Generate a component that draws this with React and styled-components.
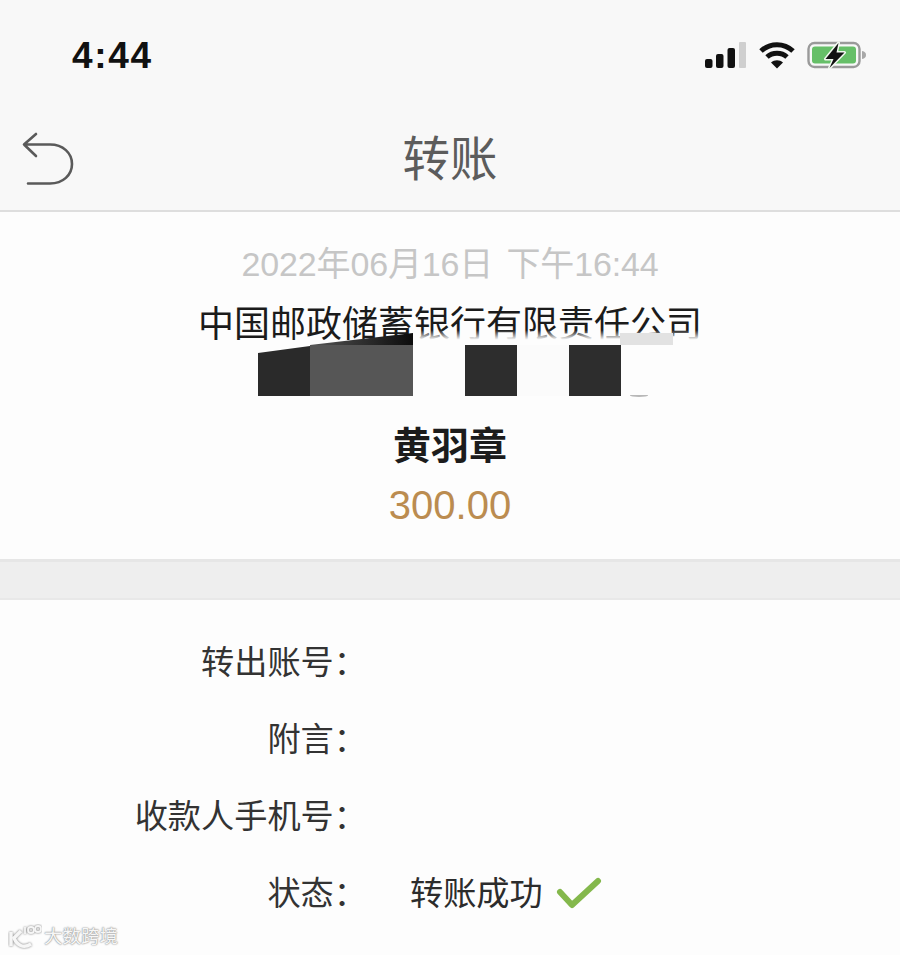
import React from "react";
import styled, { createGlobalStyle } from "styled-components";

const GlobalStyle = createGlobalStyle`
  html, body {
    margin: 0;
    padding: 0;
    background: #fdfdfd;
    font-family: "Liberation Sans", "Noto Sans CJK SC", sans-serif;
  }
`;

const Page = styled.div`
  position: relative;
  width: 900px;
  height: 955px;
  overflow: hidden;
  background: #fdfdfd;
`;

const Header = styled.header`
  height: 210px;
  background: #f8f8f8;
  border-bottom: 2px solid #dedede;
`;

const StatusBar = styled.div`
  height: 110px;
  box-sizing: border-box;
  padding: 36px 33px 0 72px;
  display: flex;
  justify-content: space-between;
  align-items: flex-start;
`;

const Clock = styled.span`
  font-family: "Liberation Sans", sans-serif;
  font-size: 37px;
  line-height: 40px;
  font-weight: 700;
  letter-spacing: 1.7px;
  color: #111;
`;

const StatusIcons = styled.div`
  display: flex;
  align-items: center;
  gap: 12px;
  padding-top: 5px;
`;

const NavBar = styled.nav`
  height: 100px;
  padding-left: 22px;
  display: grid;
  grid-template-columns: 52px 1fr 74px;
  align-items: center;
`;

const NavTitle = styled.h1`
  margin: 0;
  text-align: center;
  font-size: 47.5px;
  line-height: 56px;
  font-weight: 400;
  color: #5c5c5c;
`;

const Summary = styled.section`
  height: 347px;
  box-sizing: border-box;
  padding-top: 32px;
  display: flex;
  flex-direction: column;
  align-items: center;
`;

const DateLine = styled.div`
  font-size: 34px;
  line-height: 40px;
  letter-spacing: -0.15px;
  word-spacing: 4px;
  color: #c6c6c6;
  white-space: pre;
`;

const BankWrap = styled.div`
  position: relative;
  margin-top: 21px;
  width: 520px;
  height: 40px;
  overflow: hidden;
  text-align: center;
`;

const BankName = styled.div`
  font-size: 36px;
  line-height: 40px;
  color: #1b1b1b;
  white-space: nowrap;
`;

const BankFade = styled.div`
  position: absolute;
  left: 224px;
  right: 0;
  bottom: 0;
  height: 15px;
  background: linear-gradient(rgba(253, 253, 253, 0), #fdfdfd 65%);
`;

const AccountMask = styled.div`
  position: relative;
  align-self: flex-start;
  margin-left: 258px;
  display: flex;
  height: 51px;
`;

const MaskBlock = styled.div`
  width: ${(p) => p.$width}px;
  height: 100%;
  background: ${(p) => p.$color};
`;

const MaskEdgeBlock = styled(MaskBlock)`
  clip-path: polygon(0 8px, 100% 1px, 100% 100%, 0 100%);
`;

const MaskSmear = styled.div`
  position: absolute;
  left: 52px;
  top: -12px;
  width: 103px;
  height: 12px;
  background: linear-gradient(90deg, #555, #333 45%, #0c0c0c);
  clip-path: polygon(0 100%, 100% 0, 100% 100%);
`;

const MaskLight = styled.div`
  position: absolute;
  left: 362px;
  top: -12px;
  width: 53px;
  height: 12px;
  background: #e2e2e2;
`;

const MaskTrace = styled.div`
  position: absolute;
  left: ${(p) => p.$left}px;
  bottom: -1px;
  width: ${(p) => p.$width}px;
  height: 3px;
  border-bottom: 2px solid #b8b8b8;
  border-radius: 0 0 50% 50%;
  box-sizing: border-box;
`;

const PayeeName = styled.div`
  margin-top: 28px;
  font-size: 38px;
  line-height: 44px;
  font-weight: 700;
  color: #1c1c1c;
`;

const Amount = styled.div`
  margin-top: 15px;
  font-size: 40px;
  line-height: 44px;
  color: #bb8c50;
`;

const Divider = styled.div`
  height: 41px;
  background: #eeeeee;
  border-top: 3px solid #e6e6e6;
  border-bottom: 2px solid #e8e8e8;
  box-sizing: border-box;
`;

const Details = styled.section`
  padding-top: 43px;
  display: flex;
  flex-direction: column;
  gap: 37px;
`;

const DetailRow = styled.div`
  display: grid;
  grid-template-columns: 367px 1fr;
  height: 40px;
  align-items: center;
`;

const DetailLabel = styled.div`
  text-align: right;
  font-size: 33.2px;
  line-height: 40px;
  color: #333;
  white-space: nowrap;
`;

const DetailValue = styled.div`
  margin-left: 43px;
  display: flex;
  align-items: center;
  gap: 13px;
  font-size: 33.2px;
  line-height: 40px;
  color: #2c2c2c;
`;

const Watermark = styled.div`
  position: absolute;
  left: 8px;
  bottom: 5px;
  display: flex;
  align-items: center;
  gap: 2px;
  font-size: 18.5px;
  line-height: 24px;
  color: #f6f6f6;
  text-shadow: 0 0 2px #8c8c8c, 0 0 1px #8c8c8c;
`;

const Signal = () => (
  <svg width="42" height="26" viewBox="0 0 42 26">
    <rect x="0" y="17" width="7.500" height="9" rx="2" fill="#111" />
    <rect x="11" y="12" width="7.500" height="14" rx="2" fill="#111" />
    <rect x="22.500" y="6" width="7.500" height="20" rx="2" fill="#111" />
    <rect x="34" y="0" width="7" height="26" rx="1" fill="#cfcfcf" />
  </svg>
);

const Wifi = () => (
  <svg width="36" height="28" viewBox="0 0 36 28" fill="none">
    <path d="M2 10C11 1.500 25 1.500 34 10" stroke="#111" strokeWidth="5" />
    <path d="M8 16C13.500 11 22.500 11 28 16" stroke="#111" strokeWidth="5" />
    <path d="M12 21.500 18 27.500 24 21.500C20.500 18.500 15.500 18.500 12 21.500Z" fill="#111" />
  </svg>
);

const Battery = () => (
  <svg width="60" height="28" viewBox="0 0 60 28" fill="none">
    <rect x="1.500" y="2" width="51" height="24" rx="6" stroke="#9a9a9a" strokeWidth="2.400" />
    <rect x="5" y="5.500" width="44" height="17" rx="3" fill="#66bf68" />
    <path d="M55 10c3 .5 4 2 4 4s-1 3.500-4 4z" fill="#a8a8a8" />
    <path
      d="M31.500 2 18.500 18H26.500L22.500 27 37.500 11.500H29.500L31.500 2Z"
      fill="#111"
      stroke="#f2f8f0"
      strokeWidth="3"
      paintOrder="stroke"
      strokeLinejoin="round"
    />
  </svg>
);

const BackIcon = () => (
  <svg width="52" height="56" viewBox="0 0 52 56" fill="none">
    <path
      d="M14 2 2 12.500 14 24M2 12.500H28C41 12.500 50 21 50 32C50 43 41 51.500 28 51.500H6"
      stroke="#5a5a5a"
      strokeWidth="2.600"
      strokeLinecap="round"
      strokeLinejoin="round"
    />
  </svg>
);

const Check = () => (
  <svg width="46" height="34" viewBox="0 0 46 34" fill="none">
    <path
      d="M4 15 16 28 42 4"
      stroke="#84b84c"
      strokeWidth="6"
      strokeLinecap="round"
      strokeLinejoin="round"
    />
  </svg>
);

const WatermarkLogo = () => (
  <svg width="34" height="26" viewBox="0 0 34 26" fill="none" stroke="#f6f6f6">
    <g style={{ filter: "drop-shadow(0 0 1px #777)" }}>
      <path d="M3 8V22" strokeWidth="3.500" />
      <path d="M13 7 6 14 C9 21 15 25 23 20" strokeWidth="3.500" />
      <path d="M17 3V10" strokeWidth="1.800" />
      <circle cx="23" cy="6" r="3" strokeWidth="1.800" />
      <circle cx="30" cy="5" r="3" strokeWidth="1.800" />
    </g>
  </svg>
);

const details = [
  { label: "转出账号：" },
  { label: "附言：" },
  { label: "收款人手机号：" },
  { label: "状态：", value: "转账成功", success: true },
];

export default function App() {
  return (
    <Page>
      <GlobalStyle />
      <Header>
        <StatusBar>
          <Clock>4:44</Clock>
          <StatusIcons>
            <Signal />
            <Wifi />
            <Battery />
          </StatusIcons>
        </StatusBar>
        <NavBar>
          <BackIcon />
          <NavTitle>转账</NavTitle>
        </NavBar>
      </Header>

      <Summary>
        <DateLine>2022年06月16日 下午16:44</DateLine>
        <BankWrap>
          <BankName>中国邮政储蓄银行有限责任公司</BankName>
          <BankFade />
        </BankWrap>
        <AccountMask>
          <MaskEdgeBlock $width={52} $color="#2a2a2a" />
          <MaskBlock $width={103} $color="#565656" />
          <MaskBlock $width={52} $color="transparent" />
          <MaskBlock $width={52} $color="#2d2d2d" />
          <MaskBlock $width={52} $color="#fbfbfb" />
          <MaskBlock $width={52} $color="#2d2d2d" />
          <MaskSmear />
          <MaskLight />
          <MaskTrace $left={372} $width={18} />
        </AccountMask>
        <PayeeName>黄羽章</PayeeName>
        <Amount>300.00</Amount>
      </Summary>

      <Divider />

      <Details>
        {details.map((row) => (
          <DetailRow key={row.label}>
            <DetailLabel>{row.label}</DetailLabel>
            <DetailValue>
              {row.value}
              {row.success && <Check />}
            </DetailValue>
          </DetailRow>
        ))}
      </Details>

      <Watermark>
        <WatermarkLogo />
        大数跨境
      </Watermark>
    </Page>
  );
}
